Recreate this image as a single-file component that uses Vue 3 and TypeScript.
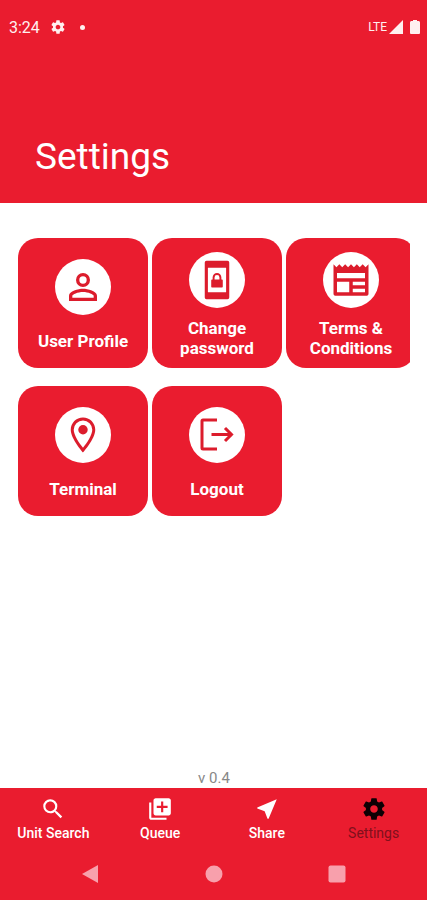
<script setup lang="ts">
import { ref } from 'vue'

type IconName = 'profile' | 'password' | 'terms' | 'terminal' | 'logout'

interface Tile {
  icon: IconName
  label: string
}

interface Tab {
  label: string
  path: string
}

const gear =
  'M19.43 12.98c.04-.32.07-.64.07-.98s-.03-.66-.07-.98l2.11-1.65c.19-.15.24-.42.12-.64l-2-3.46c-.12-.22-.39-.3-.61-.22l-2.49 1c-.52-.4-1.08-.73-1.69-.98l-.38-2.65A.49.49 0 0 0 14 2h-4c-.25 0-.46.18-.49.42l-.38 2.65c-.61.25-1.17.59-1.69.98l-2.49-1c-.23-.09-.49 0-.61.22l-2 3.46c-.13.22-.07.49.12.64l2.11 1.65c-.04.32-.07.65-.07.98s.03.66.07.98l-2.11 1.65c-.19.15-.24.42-.12.64l2 3.46c.12.22.39.3.61.22l2.49-1c.52.4 1.08.73 1.69.98l.38 2.65c.03.24.24.42.49.42h4c.25 0 .46-.18.49-.42l.38-2.65c.61-.25 1.17-.59 1.69-.98l2.49 1c.23.09.49 0 .61-.22l2-3.46c.12-.22.07-.49-.12-.64l-2.11-1.65zM12 15.5c-1.93 0-3.5-1.57-3.5-3.5s1.57-3.5 3.5-3.5 3.5 1.57 3.5 3.5-1.57 3.5-3.5 3.5z'

const tiles: Tile[] = [
  { icon: 'profile', label: 'User Profile' },
  { icon: 'password', label: 'Change password' },
  { icon: 'terms', label: 'Terms & Conditions' },
  { icon: 'terminal', label: 'Terminal' },
  { icon: 'logout', label: 'Logout' },
]

const tabs: Tab[] = [
  {
    label: 'Unit Search',
    path: 'M15.5 14h-.79l-.28-.27A6.47 6.47 0 0 0 16 9.5 6.5 6.5 0 1 0 9.5 16c1.61 0 3.09-.59 4.23-1.57l.27.28v.79l5 4.99L20.49 19l-4.99-5zm-6 0C7.01 14 5 11.99 5 9.5S7.01 5 9.5 5 14 7.01 14 9.5 11.99 14 9.5 14z',
  },
  {
    label: 'Queue',
    path: 'M4 6H2v14c0 1.1.9 2 2 2h14v-2H4V6zm16-4H8c-1.1 0-2 .9-2 2v12c0 1.1.9 2 2 2h12c1.1 0 2-.9 2-2V4c0-1.1-.9-2-2-2zm-1 9h-4v4h-2v-4H9V9h4V5h2v4h4v2z',
  },
  { label: 'Share', path: 'M21 3L3 10.53v.98l6.84 2.65L12.48 21h.98L21 3z' },
  { label: 'Settings', path: gear },
]

const activeTab = ref('Settings')
</script>

<template>
  <div class="screen">
    <header class="header">
      <div class="status">
        <span class="clock">3:24</span>
        <svg class="status-gear" viewBox="0 0 24 24" aria-hidden="true"><path :d="gear" /></svg>
        <span class="dot"></span>
        <span class="network">LTE</span>
        <svg class="signal" viewBox="0 0 14 14" aria-hidden="true"><path d="M14 0v14H0z" /></svg>
        <svg class="battery" viewBox="0 0 10 14" aria-hidden="true">
          <path d="M3 0h4v1h1.5C9.3 1 10 1.7 10 2.5V13a1 1 0 0 1-1 1H1a1 1 0 0 1-1-1V2.500C0 1.7.7 1 1.500 1H3z" />
        </svg>
      </div>
      <h1 class="title">Settings</h1>
    </header>

    <main class="content">
      <div class="tiles">
        <button v-for="tile in tiles" :key="tile.label" type="button" class="tile">
          <span class="badge">
            <svg v-if="tile.icon === 'profile'" viewBox="0 0 24 24" aria-hidden="true">
              <path d="M12 4a4 4 0 1 1 0 8 4 4 0 0 1 0-8m0 1.9a2.1 2.1 0 1 0 0 4.2 2.1 2.1 0 0 0 0-4.2M12 13c2.67 0 8 1.33 8 4v3H4v-3c0-2.67 5.33-4 8-4m0 1.9c-2.97 0-6.1 1.46-6.1 2.1v1.1h12.2V17c0-.64-3.13-2.1-6.1-2.1z" />
            </svg>
            <svg v-else-if="tile.icon === 'password'" viewBox="0 0 24 24" aria-hidden="true">
              <path d="M17.2 19H6.800V5h10.400m.8-4H6a1 1 0 0 0-1 1v20a1 1 0 0 0 1 1h12a1 1 0 0 0 1-1V2a1 1 0 0 0-1-1z" />
              <path d="M9.500 11.700v-1.200a2.500 2.500 0 0 1 5 0v1.200h.4c.2 0 .4.2.4.4v3.800c0 .2-.2.4-.4.4H9.100a.4.4 0 0 1-.4-.4v-3.800c0-.2.2-.4.4-.4m1.500 0h2.800v-1.200a1.400 1.400 0 0 0-2.800 0z" />
            </svg>
            <svg v-else-if="tile.icon === 'terms'" viewBox="0 0 24 24" aria-hidden="true">
              <path d="M20 11H4V8h16m0 7h-7v-2h7m0 6h-7v-2h7m-9 2H4v-6h7m9.33-8.33L18.67 3 17 4.67 15.33 3l-1.66 1.67L12 3l-1.67 1.67L8.67 3 7 4.67 5.33 3 3.67 4.67 2 3v17a1 1 0 0 0 1 1h18a1 1 0 0 0 1-1V3z" />
            </svg>
            <svg v-else-if="tile.icon === 'terminal'" viewBox="0 0 24 24" aria-hidden="true">
              <path d="M12 2C8.13 2 5 5.13 5 9c0 5.25 7 13 7 13s7-7.75 7-13c0-3.87-3.13-7-7-7zM6.7 9a5.3 5.3 0 0 1 10.6 0c0 3-3.1 7.6-5.3 10.3C9.8 16.6 6.7 12 6.7 9z" />
              <circle cx="12" cy="9" r="2.7" />
            </svg>
            <svg v-else class="outline" viewBox="0 0 42 42" aria-hidden="true">
              <path d="M21 6H7a1 1 0 0 0-1 1v27a1 1 0 0 0 1 1h14M15.5 20.5H35.5M29 14l6.5 6.5L29 27" />
            </svg>
          </span>
          <span class="tile-label">{{ tile.label }}</span>
        </button>
      </div>
      <p class="version">v 0.4</p>
    </main>

    <footer class="footer">
      <nav class="tabs">
        <button
          v-for="tab in tabs"
          :key="tab.label"
          type="button"
          class="tab"
          :class="{ active: tab.label === activeTab }"
          @click="activeTab = tab.label"
        >
          <svg viewBox="0 0 24 24" aria-hidden="true"><path :d="tab.path" /></svg>
          <span class="tab-label">{{ tab.label }}</span>
        </button>
      </nav>
      <div class="system">
        <button type="button" class="key" aria-label="Back">
          <svg viewBox="0 0 18 18" aria-hidden="true"><path d="M17 0v18L1 9z" /></svg>
        </button>
        <button type="button" class="key" aria-label="Home">
          <svg viewBox="0 0 18 18" aria-hidden="true"><circle cx="9" cy="9" r="8.5" /></svg>
        </button>
        <button type="button" class="key" aria-label="Recent apps">
          <svg viewBox="0 0 18 18" aria-hidden="true"><rect x="0.5" y="0.5" width="17" height="17" rx="2" /></svg>
        </button>
      </div>
    </footer>
  </div>
</template>

<style>
body {
  margin: 0;
  background: #fff;
}
</style>

<style scoped>
.screen {
  --red: #ea1c2f;
  display: flex;
  flex-direction: column;
  min-height: 100vh;
  font-family: Roboto, 'Liberation Sans', sans-serif;
  color: #fff;
}

button {
  margin: 0;
  padding: 0;
  border: 0;
  background: none;
  color: inherit;
  font: inherit;
  cursor: pointer;
}

svg {
  display: block;
  fill: currentColor;
}

.header {
  background: var(--red);
  padding-bottom: 22px;
}

.status {
  display: flex;
  align-items: center;
  height: 54px;
  padding: 0 7px 0 9px;
  color: #fff0f0;
}

.clock {
  font-size: 16px;
}

.status-gear {
  width: 16px;
  height: 16px;
  margin-left: 10px;
}

.dot {
  width: 5px;
  height: 5px;
  margin-left: 14px;
  border-radius: 50%;
  background: currentColor;
}

.network {
  margin-left: auto;
  font-size: 12px;
}

.signal {
  width: 14px;
  height: 14px;
  margin-left: 2px;
}

.battery {
  width: 10px;
  height: 14px;
  margin-left: 7px;
}

.title {
  margin: 0;
  padding: 79px 35px 0;
  font-size: 37px;
  font-weight: 400;
  line-height: 48px;
}

.content {
  flex: 1;
  display: flex;
  flex-direction: column;
  justify-content: space-between;
  gap: 24px;
  padding: 35px 17px 0 18px;
}

.tiles {
  display: grid;
  grid-template-columns: repeat(3, 130px);
  gap: 18px 4px;
  overflow: hidden;
}

.tile {
  display: flex;
  flex-direction: column;
  align-items: center;
  justify-content: space-evenly;
  height: 130px;
  padding: 4px 12px 0;
  border-radius: 20px;
  background: var(--red);
}

.badge {
  display: grid;
  place-items: center;
  width: 56px;
  height: 56px;
  border-radius: 50%;
  background: #fff;
  color: #dc1c2c;
}

.badge svg {
  width: 42px;
  height: 42px;
}

.badge .outline {
  fill: none;
  stroke: currentColor;
  stroke-width: 3;
}

.tile-label {
  font-size: 17px;
  font-weight: 700;
  line-height: 20px;
}

.version {
  margin: 0;
  color: #888;
  font-size: 15px;
  line-height: 20px;
  text-align: center;
}

.footer {
  background: var(--red);
}

.tabs {
  display: grid;
  grid-template-columns: repeat(4, 1fr);
}

.tab {
  display: flex;
  flex-direction: column;
  align-items: center;
  gap: 2px;
  padding: 8px 0;
}

.tab svg {
  width: 26px;
  height: 26px;
}

.tab-label {
  font-size: 14px;
  font-weight: 500;
  line-height: 18px;
}

.active svg {
  color: #0c0004;
}

.active .tab-label {
  color: #80101c;
  font-weight: 400;
}

.system {
  display: flex;
  justify-content: space-between;
  padding: 15px 81px 17px;
}

.key {
  color: #f8a0ac;
}

.key svg {
  width: 18px;
  height: 18px;
}
</style>
